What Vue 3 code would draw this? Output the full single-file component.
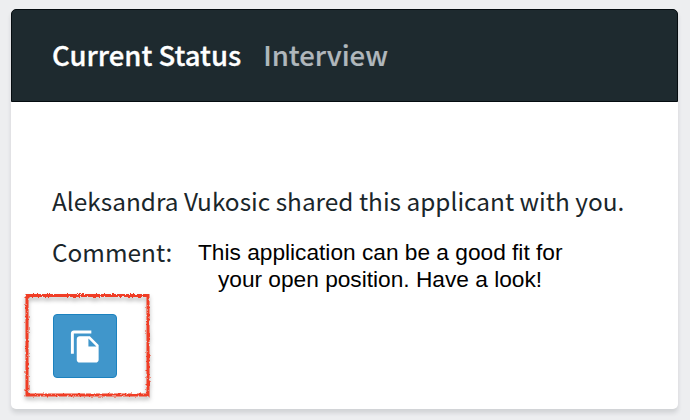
<template>
  <div class="page">
    <div class="status-card">
      <div class="card-header">
        <span class="header-label">Current Status</span>
        <span class="header-value">{{ status }}</span>
      </div>

      <div class="card-body">
        <p class="shared-text">{{ sharedBy }} shared this applicant with you.</p>

        <div class="comment-row">
          <span class="comment-label">Comment:</span>
          <div class="comment-text">
            <div v-for="line in commentLines" :key="line">{{ line }}</div>
          </div>
        </div>

        <div class="action">
          <button class="copy-btn" aria-label="Copy application">
            <svg viewBox="0 0 24 24" width="35" height="35">
              <path
                fill="#fff"
                d="M16 1H4c-1.1 0-2 .9-2 2v14h2V3h12V1zm-1 4l6 6v10c0 1.1-.9 2-2 2H7.99C6.89 23 6 22.1 6 21V7c0-1.1.89-2 1.99-2h7zm-1 7h5.5L14 6.5V12z"
              />
            </svg>
          </button>

          <!-- Hand drawn marker around the button -->
          <svg class="marker" width="134" height="114" viewBox="0 0 134 114">
            <defs>
              <filter id="rough" x="-5%" y="-5%" width="110%" height="110%">
                <feTurbulence type="fractalNoise" baseFrequency="0.45" numOctaves="2" seed="4" />
                <feDisplacementMap in="SourceGraphic" scale="3" xChannelSelector="R" yChannelSelector="G" />
              </filter>
            </defs>
            <rect x="7" y="7.5" width="121" height="99.5" fill="none" stroke="#f03e27" stroke-width="3" filter="url(#rough)" />
          </svg>
        </div>
      </div>
    </div>
  </div>
</template>

<script setup>
import { ref } from "vue";

const status = ref("Interview");
const sharedBy = ref("Aleksandra Vukosic");
const commentLines = ref([
  "This application can be a good fit for",
  "your open position. Have a look!",
]);
</script>

<style>
body {
  background: #edeef0;
}
</style>

<style scoped>
.page {
  box-sizing: border-box;
  height: 420px;
  padding: 9px 12px 11px 11px;
  overflow: hidden;
  background: #edeef0;
  font-family: "Noto Sans CJK SC", "Noto Sans", sans-serif;
}

.status-card {
  height: 400px;
  border-radius: 5px;
  background: #fff;
  box-shadow: 0 4px 4px rgba(40, 50, 60, 0.14);
}

.card-header {
  box-sizing: border-box;
  display: flex;
  align-items: center;
  gap: 22px;
  height: 93px;
  padding: 0 41px 3px 40px;
  border: 1px solid #050c10;
  border-radius: 5px 5px 0 0;
  background: #1e2a2f;
  font-size: 27.5px;
  line-height: 40px;
  font-weight: 500;
  white-space: nowrap;
}

.header-label {
  color: #fff;
  -webkit-text-stroke: 0.3px #fff;
}

.header-value {
  color: #b0b7bc;
  -webkit-text-stroke: 0.2px #b0b7bc;
}

.card-body {
  padding: 79px 41px 0;
  color: #1a262b;
  font-size: 24.4px;
  white-space: nowrap;
}

.shared-text {
  margin: 0;
  line-height: 40px;
}

.comment-row {
  display: flex;
  align-items: flex-start;
  margin-top: 11px;
}

.comment-label {
  width: 146px;
  line-height: 40px;
}

.comment-text {
  width: 364px;
  padding-top: 7px;
  color: #000;
  font-family: "Liberation Sans", Arial, sans-serif;
  font-size: 22.7px;
  line-height: 27px;
  text-align: center;
}

.action {
  position: relative;
  width: 64px;
  height: 64px;
  margin: 21px 0 0 1px;
}

.copy-btn {
  display: flex;
  align-items: center;
  justify-content: center;
  width: 64px;
  height: 64px;
  padding: 0;
  border: 1px solid #1c82bf;
  border-radius: 4px;
  background: #4096cb;
  cursor: pointer;
}

.marker {
  position: absolute;
  top: -26px;
  left: -33px;
  pointer-events: none;
  filter: drop-shadow(0 3px 2px rgba(0, 0, 0, 0.3));
}
</style>
